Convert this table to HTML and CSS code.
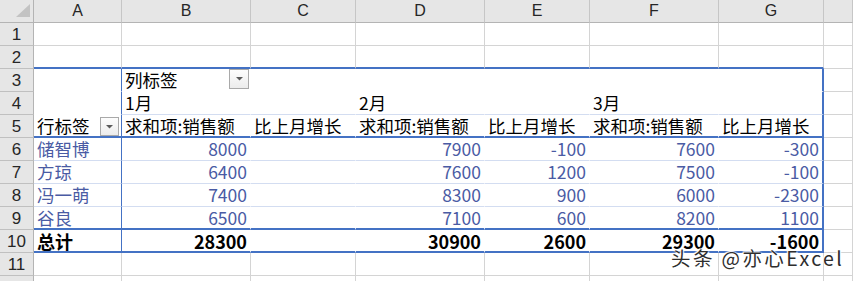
FILE: index.html
```html
<!DOCTYPE html>
<html lang="zh-CN">
<head>
<meta charset="utf-8">
<title>数据透视表</title>
<link rel="stylesheet" href="styles.css">
</head>
<body>
<div class="sheet">
  <!-- column header row -->
  <div class="c corner"><svg class="tri" width="16" height="14" viewBox="0 0 16 14"><polygon points="15,0 15,13 1,13" fill="#c3c3c3"/></svg></div>
  <div class="c hd">A</div>
  <div class="c hd">B</div>
  <div class="c hd">C</div>
  <div class="c hd">D</div>
  <div class="c hd">E</div>
  <div class="c hd">F</div>
  <div class="c hd">G</div>
  <div class="c hd"></div>

  <!-- row 1 -->
  <div class="c rn">1</div>
  <div class="c"></div><div class="c"></div><div class="c"></div><div class="c"></div><div class="c"></div><div class="c"></div><div class="c"></div><div class="c"></div>

  <!-- row 2 -->
  <div class="c rn">2</div>
  <div class="c bt"></div><div class="c bt"></div><div class="c bt"></div><div class="c bt"></div><div class="c bt"></div><div class="c bt"></div><div class="c bt"></div><div class="c"></div>

  <!-- row 3 -->
  <div class="c rn">3</div>
  <div class="c pv pa"></div>
  <div class="c pv hasbtn"><span>列标签</span><span class="dd top"><svg width="7" height="4" viewBox="0 0 7 4"><polygon points="0,0 7,0 3.5,3.5" fill="#5a5a5a"/></svg></span></div>
  <div class="c pv"></div><div class="c pv"></div><div class="c pv"></div><div class="c pv"></div>
  <div class="c pv pg"></div>
  <div class="c"></div>

  <!-- row 4 -->
  <div class="c rn">4</div>
  <div class="c pv pa"></div>
  <div class="c pv bl">1月</div>
  <div class="c pv bl"></div>
  <div class="c pv bl">2月</div>
  <div class="c pv bl"></div>
  <div class="c pv bl">3月</div>
  <div class="c pv bl pg"></div>
  <div class="c"></div>

  <!-- row 5 -->
  <div class="c rn">5</div>
  <div class="c pv pa bt hasbtn"><span>行标签</span><span class="dd low"><svg width="7" height="4" viewBox="0 0 7 4"><polygon points="0,0 7,0 3.5,3.5" fill="#5a5a5a"/></svg></span></div>
  <div class="c pv bt">求和项:销售额</div>
  <div class="c pv bt">比上月增长</div>
  <div class="c pv bt">求和项:销售额</div>
  <div class="c pv bt">比上月增长</div>
  <div class="c pv bt">求和项:销售额</div>
  <div class="c pv bt pg">比上月增长</div>
  <div class="c"></div>

  <!-- row 6 -->
  <div class="c rn">6</div>
  <div class="c pv pa bl d">储智博</div>
  <div class="c pv bl d n">8000</div>
  <div class="c pv bl d n"></div>
  <div class="c pv bl d n">7900</div>
  <div class="c pv bl d n">-100</div>
  <div class="c pv bl d n">7600</div>
  <div class="c pv bl d n pg">-300</div>
  <div class="c"></div>

  <!-- row 7 -->
  <div class="c rn">7</div>
  <div class="c pv pa bl d">方琼</div>
  <div class="c pv bl d n">6400</div>
  <div class="c pv bl d n"></div>
  <div class="c pv bl d n">7600</div>
  <div class="c pv bl d n">1200</div>
  <div class="c pv bl d n">7500</div>
  <div class="c pv bl d n pg">-100</div>
  <div class="c"></div>

  <!-- row 8 -->
  <div class="c rn">8</div>
  <div class="c pv pa bl d">冯一萌</div>
  <div class="c pv bl d n">7400</div>
  <div class="c pv bl d n"></div>
  <div class="c pv bl d n">8300</div>
  <div class="c pv bl d n">900</div>
  <div class="c pv bl d n">6000</div>
  <div class="c pv bl d n pg">-2300</div>
  <div class="c"></div>

  <!-- row 9 -->
  <div class="c rn">9</div>
  <div class="c pv pa bt d">谷良</div>
  <div class="c pv bt d n">6500</div>
  <div class="c pv bt d n"></div>
  <div class="c pv bt d n">7100</div>
  <div class="c pv bt d n">600</div>
  <div class="c pv bt d n">8200</div>
  <div class="c pv bt d n pg">1100</div>
  <div class="c"></div>

  <!-- row 10 -->
  <div class="c rn">10</div>
  <div class="c pv pa bt tot">总计</div>
  <div class="c pv bt tot n">28300</div>
  <div class="c pv bt tot n"></div>
  <div class="c pv bt tot n">30900</div>
  <div class="c pv bt tot n">2600</div>
  <div class="c pv bt tot n">29300</div>
  <div class="c pv bt tot n pg">-1600</div>
  <div class="c"></div>

  <!-- row 11 -->
  <div class="c rn">11</div>
  <div class="c"></div><div class="c"></div><div class="c"></div><div class="c"></div><div class="c"></div><div class="c"></div><div class="c"></div><div class="c"></div>

  <!-- row 12 (partial, only its top edge is visible) -->
  <div class="c rn"></div>
  <div class="c"></div><div class="c"></div><div class="c"></div><div class="c"></div><div class="c"></div><div class="c"></div><div class="c"></div><div class="c"></div>

  <div class="wm">头条 @亦心Excel</div>
</div>
</body>
</html>
```

FILE: styles.css
```css
html, body {
  margin: 0;
  padding: 0;
  background: #ffffff;
  overflow: hidden;
}

.sheet {
  position: relative;
  width: 853px;
  height: 281px;
  overflow: hidden;
  display: grid;
  grid-template-columns: 34px 88px 129px 105px 129px 105px 129px 105px 1fr;
  grid-auto-rows: 23px;
  font-family: "Noto Sans CJK SC", "Noto Sans", sans-serif;
  font-size: 17.5px;
  color: #000000;
}

.c {
  box-sizing: border-box;
  border-right: 1px solid #d4d4d4;
  border-bottom: 1px solid #d4d4d4;
  padding: 0 3px;
  line-height: 22px;
  white-space: nowrap;
}

.corner {
  background: #e6e6e6;
  border-right-color: #b4b4b4;
  border-bottom-color: #b4b4b4;
  display: flex;
  align-items: flex-start;
  justify-content: flex-end;
  padding: 4px 2px 0 0;
}

.tri {
  display: block;
}

.hd {
  background: #e6e6e6;
  border-right-color: #c6c6c6;
  border-bottom-color: #b4b4b4;
  text-align: center;
  font-family: "Liberation Sans", "Noto Sans", sans-serif;
  font-size: 16px;
  color: #262626;
  line-height: 22px;
}

.rn {
  background: #e6e6e6;
  border-right-color: #b4b4b4;
  border-bottom-color: #c0c0c0;
  text-align: center;
  font-family: "Liberation Sans", "Noto Sans", sans-serif;
  font-size: 17px;
  color: #262626;
  line-height: 23px;
  padding: 0;
}

/* pivot table region */
.pv {
  border-right-color: #ffffff;
  border-bottom-color: #ffffff;
}

.pa {
  border-right: 1px solid #4472c4;
}

.pg {
  border-right: 2px solid #4472c4;
}

.bl {
  border-bottom: 1px solid #d3ddf1;
}

.bt {
  border-bottom: 2px solid #4472c4;
}

.d {
  color: #4a5ba4;
}

.n {
  text-align: right;
}

.tot {
  font-weight: bold;
  font-size: 18px;
}

.hasbtn {
  display: flex;
  justify-content: space-between;
  padding-right: 1px;
}

.dd {
  box-sizing: border-box;
  display: flex;
  align-items: center;
  justify-content: center;
  width: 20px;
  height: 20px;
  border: 1px solid #a9a9a9;
  background: linear-gradient(#fdfdfd, #ececec);
}

.dd svg {
  display: block;
}

.dd.low {
  width: 19px;
  height: 19px;
  margin-top: 2px;
  margin-right: 1px;
}

.wm {
  position: absolute;
  left: 671px;
  top: 248px;
  font-family: "Noto Sans CJK SC", "Liberation Sans", sans-serif;
  font-size: 19.5px;
  line-height: 20px;
  letter-spacing: 2.4px;
  color: #2e2e2e;
  text-shadow: 0 0 2px #ffffff, 0 0 2px #ffffff, 1px 1px 1px #ffffff, -1px -1px 1px #ffffff;
  white-space: nowrap;
}
```
